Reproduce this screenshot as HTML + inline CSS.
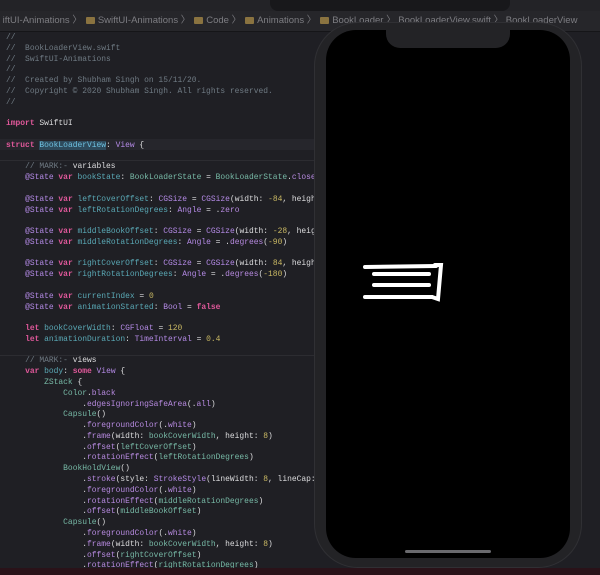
<!DOCTYPE html><html><head><style>
body{margin:0;width:600px;height:575px;background:#1f1f24;overflow:hidden;position:relative;font-family:"Liberation Mono",monospace}
.top{position:absolute;left:0;top:0;width:600px;height:11px;background:#232327}
.crumb{position:absolute;left:0;top:11px;width:600px;height:20px;background:#26262a;border-bottom:1px solid #151518;font:9.5px "Liberation Sans",sans-serif;color:#7d7d82;line-height:20px;white-space:nowrap}
.f{display:inline-block;width:9px;height:7px;background:#8a7340;border-radius:1px;margin:0 3px 0 4px;vertical-align:-1px}
pre{position:absolute;left:6px;top:33px;margin:0;font:7.95px/10.78px "Liberation Mono",monospace;color:#dcdcde}
.c{color:#6f7a83}.k{color:#e0589a;font-weight:bold}.t{color:#b48ae6}.p{color:#5aa9b6}.n{color:#c9b863}.m{color:#b78ae0}.g{color:#77b9a6}
.hl{position:absolute;left:0;top:139px;width:320px;height:11px;background:#26262c}
.sel{background:#2e4a5c;color:#6ec0e0}
.div{position:absolute;left:0;width:320px;height:1px;background:#2c2c31}
.phone{position:absolute;left:314px;top:22px;width:268px;height:546px;border-radius:44px;background:#232326;border:1px solid #303034;box-sizing:border-box}
.screen{position:absolute;left:326px;top:30px;width:244px;height:528px;border-radius:30px;background:#000}
.notch{position:absolute;left:386px;top:29px;width:124px;height:19px;background:#232326;border-radius:0 0 14px 14px}
.home{position:absolute;left:405px;top:550px;width:86px;height:3px;background:#6a6a6e;border-radius:2px}
.bot{position:absolute;left:0;top:568px;width:600px;height:7px;background:#2a1219}
.tb{position:absolute;left:270px;top:0;width:240px;height:11px;background:#18181b;border-radius:0 0 8px 8px}
</style></head><body>
<div class="top"></div>
<div class="crumb">&nbsp;iftUI-Animations 〉<span class="f"></span>SwiftUI-Animations 〉<span class="f"></span>Code 〉<span class="f"></span>Animations 〉<span class="f"></span>BookLoader 〉 BookLoaderView.swift 〉 BookLoaderView</div>
<div class="tb"></div>
<div class="hl"></div>
<div class="div" style="top:160px"></div>
<div class="div" style="top:355px"></div>
<pre><span class="c">//
//  BookLoaderView.swift
//  SwiftUI-Animations
//
//  Created by Shubham Singh on 15/11/20.
//  Copyright © 2020 Shubham Singh. All rights reserved.
//</span>

<span class="k">import</span> SwiftUI

<span class="k">struct</span> <span class="sel">BookLoaderView</span>: <span class="t">View</span> {

    <span class="c">// MARK:- </span>variables
    <span class="t">@State</span> <span class="k">var</span> <span class="p">bookState</span>: <span class="g">BookLoaderState</span> = <span class="g">BookLoaderState</span>.<span class="m">closed</span>

    <span class="t">@State</span> <span class="k">var</span> <span class="p">leftCoverOffset</span>: <span class="t">CGSize</span> = <span class="t">CGSize</span>(width: <span class="n">-84</span>, height
    <span class="t">@State</span> <span class="k">var</span> <span class="p">leftRotationDegrees</span>: <span class="t">Angle</span> = .<span class="m">zero</span>

    <span class="t">@State</span> <span class="k">var</span> <span class="p">middleBookOffset</span>: <span class="t">CGSize</span> = <span class="t">CGSize</span>(width: <span class="n">-28</span>, heig
    <span class="t">@State</span> <span class="k">var</span> <span class="p">middleRotationDegrees</span>: <span class="t">Angle</span> = .<span class="m">degrees</span>(<span class="n">-90</span>)

    <span class="t">@State</span> <span class="k">var</span> <span class="p">rightCoverOffset</span>: <span class="t">CGSize</span> = <span class="t">CGSize</span>(width: <span class="n">84</span>, heigh
    <span class="t">@State</span> <span class="k">var</span> <span class="p">rightRotationDegrees</span>: <span class="t">Angle</span> = .<span class="m">degrees</span>(<span class="n">-180</span>)

    <span class="t">@State</span> <span class="k">var</span> <span class="p">currentIndex</span> = <span class="n">0</span>
    <span class="t">@State</span> <span class="k">var</span> <span class="p">animationStarted</span>: <span class="t">Bool</span> = <span class="k">false</span>

    <span class="k">let</span> <span class="p">bookCoverWidth</span>: <span class="t">CGFloat</span> = <span class="n">120</span>
    <span class="k">let</span> <span class="p">animationDuration</span>: <span class="t">TimeInterval</span> = <span class="n">0.4</span>

    <span class="c">// MARK:- </span>views
    <span class="k">var</span> <span class="p">body</span>: <span class="k">some</span> <span class="t">View</span> {
        <span class="g">ZStack</span> {
            <span class="g">Color</span>.<span class="m">black</span>
                .<span class="m">edgesIgnoringSafeArea</span>(.<span class="m">all</span>)
            <span class="g">Capsule</span>()
                .<span class="m">foregroundColor</span>(.<span class="m">white</span>)
                .<span class="m">frame</span>(width: <span class="g">bookCoverWidth</span>, height: <span class="n">8</span>)
                .<span class="m">offset</span>(<span class="g">leftCoverOffset</span>)
                .<span class="m">rotationEffect</span>(<span class="g">leftRotationDegrees</span>)
            <span class="g">BookHoldView</span>()
                .<span class="m">stroke</span>(style: <span class="t">StrokeStyle</span>(lineWidth: <span class="n">8</span>, lineCap:
                .<span class="m">foregroundColor</span>(.<span class="m">white</span>)
                .<span class="m">rotationEffect</span>(<span class="g">middleRotationDegrees</span>)
                .<span class="m">offset</span>(<span class="g">middleBookOffset</span>)
            <span class="g">Capsule</span>()
                .<span class="m">foregroundColor</span>(.<span class="m">white</span>)
                .<span class="m">frame</span>(width: <span class="g">bookCoverWidth</span>, height: <span class="n">8</span>)
                .<span class="m">offset</span>(<span class="g">rightCoverOffset</span>)
                .<span class="m">rotationEffect</span>(<span class="g">rightRotationDegrees</span>)</pre>
<div class="phone"></div>
<div class="screen"></div>
<div class="notch"></div>
<div class="home"></div>
<svg style="position:absolute;left:340px;top:240px" width="120" height="80" viewBox="0 0 120 80">
<g stroke="#fff" stroke-width="4" stroke-linecap="round" fill="none">
<line x1="25" y1="27" x2="96" y2="26"/>
<line x1="34" y1="34" x2="89" y2="34"/>
<line x1="34" y1="45" x2="89" y2="45"/>
<line x1="25" y1="57" x2="92" y2="57"/>
<path d="M95 25 L101 25 L98 59 L92 57"/>
</g></svg>
<div class="bot"></div>
</body></html>
